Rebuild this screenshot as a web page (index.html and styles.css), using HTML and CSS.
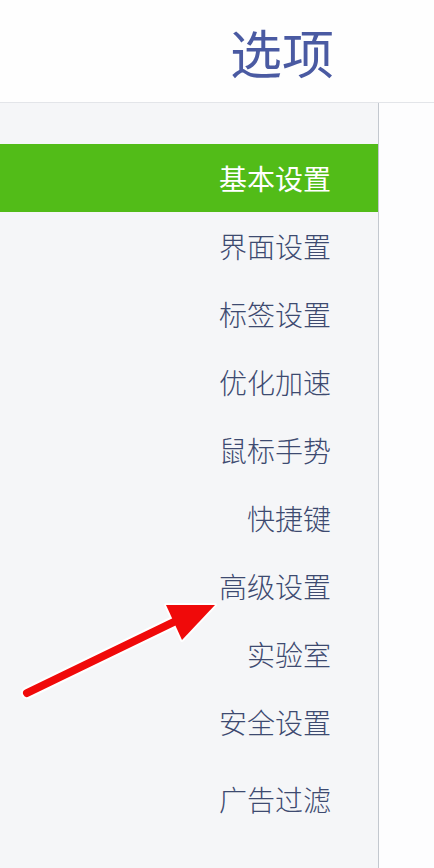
FILE: index.html
```html
<!DOCTYPE html>
<html lang="zh-CN">
<head>
<meta charset="utf-8">
<title>选项</title>
<link rel="stylesheet" href="styles.css">
</head>
<body>
<div class="page">
  <header class="header">
    <h1 class="title">选项</h1>
  </header>
  <div class="main">
    <nav class="sidebar">
      <div class="item active">基本设置</div>
      <div class="item">界面设置</div>
      <div class="item">标签设置</div>
      <div class="item">优化加速</div>
      <div class="item">鼠标手势</div>
      <div class="item">快捷键</div>
      <div class="item">高级设置</div>
      <div class="item">实验室</div>
      <div class="item">安全设置</div>
      <div class="item last">广告过滤</div>
    </nav>
    <div class="content"></div>
  </div>
  <svg class="arrow" width="434" height="868" viewBox="0 0 434 868">
    <line x1="27" y1="693" x2="180" y2="619" stroke="#ffffff" stroke-width="12" stroke-linecap="round"/>
    <polygon points="166,605 215,605 182,640" fill="#ffffff" stroke="#ffffff" stroke-width="4" stroke-linejoin="round"/>
    <line x1="27" y1="693" x2="180" y2="619" stroke="#f00a0a" stroke-width="8" stroke-linecap="round"/>
    <polygon points="166,605 215,605 182,640" fill="#f00a0a"/>
  </svg>
</div>
</body>
</html>
```

FILE: styles.css
```css
html, body {
  margin: 0;
  padding: 0;
  background: #ffffff;
}
.page {
  position: relative;
  width: 434px;
  height: 868px;
  overflow: hidden;
  display: flex;
  flex-direction: column;
  font-family: "Noto Sans CJK SC", "Noto Sans", sans-serif;
}
.header {
  box-sizing: border-box;
  height: 103px;
  border-bottom: 1px solid #e3e5e9;
  background: #fefefe;
  display: flex;
  justify-content: flex-end;
  padding: 26px 100px 0 0;
}
.title {
  margin: 0;
  font-size: 52px;
  line-height: 52px;
  font-weight: 400;
  color: #4a5aa2;
}
.main {
  flex: 1;
  display: flex;
}
.sidebar {
  box-sizing: border-box;
  width: 379px;
  background: #f5f6f8;
  border-right: 1px solid #c3c8cf;
  padding-top: 41px;
  display: flex;
  flex-direction: column;
}
.item {
  height: 68px;
  line-height: 68px;
  font-size: 28px;
  font-weight: 300;
  color: #3d4a70;
  text-align: right;
  padding-right: 47px;
}
.item.active {
  background: #52bc18;
  color: #ffffff;
  font-weight: 400;
}
.item.last {
  margin-top: 9px;
}
.content {
  flex: 1;
  background: #fdfdfe;
}
.arrow {
  position: absolute;
  left: 0;
  top: 0;
  pointer-events: none;
}
```
